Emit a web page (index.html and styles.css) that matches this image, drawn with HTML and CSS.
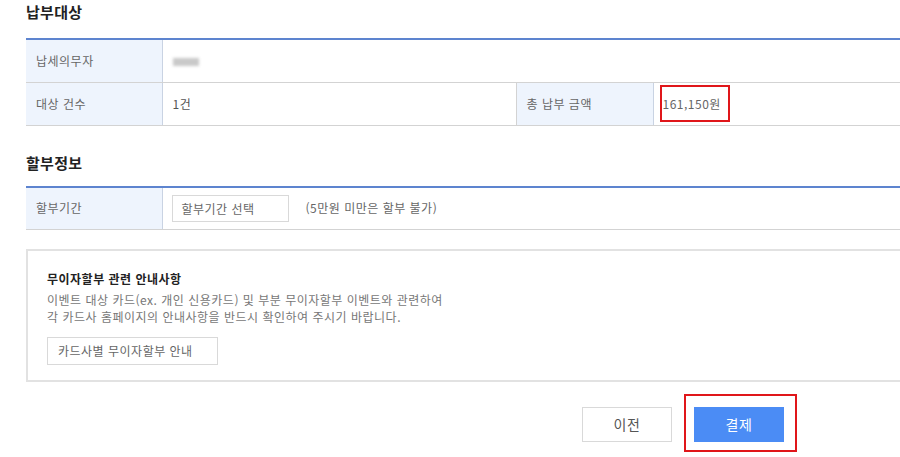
FILE: index.html
```html
<!DOCTYPE html>
<html lang="ko">
<head>
<meta charset="utf-8">
<link rel="stylesheet" href="styles.css">
</head>
<body>
<div class="page">
  <h2 class="sec-title first">납부대상</h2>
  <table class="info">
    <colgroup><col class="c1"><col class="c2"><col class="c3"><col class="c4"></colgroup>
    <tr>
      <th>납세의무자</th>
      <td colspan="3"><span class="blur"></span></td>
    </tr>
    <tr>
      <th>대상 건수</th>
      <td>1건</td>
      <th>총 납부 금액</th>
      <td class="amount"><span class="hl">161,150원</span></td>
    </tr>
  </table>

  <h2 class="sec-title second">할부정보</h2>
  <table class="info">
    <colgroup><col class="c1"><col></colgroup>
    <tr>
      <th>할부기간</th>
      <td class="sel-cell"><div class="sel-row"><span class="select">할부기간 선택</span><span class="note">(5만원 미만은 할부 불가)</span></div></td>
    </tr>
  </table>

  <div class="notice">
    <p class="notice-title">무이자할부 관련 안내사항</p>
    <p class="notice-text">이벤트 대상 카드(ex. 개인 신용카드) 및 부분 무이자할부 이벤트와 관련하여<br>각 카드사 홈페이지의 안내사항을 반드시 확인하여 주시기 바랍니다.</p>
    <span class="notice-btn">카드사별 무이자할부 안내</span>
  </div>

  <div class="actions">
    <span class="btn prev">이전</span>
    <span class="hl-box"><span class="btn pay">결제</span></span>
  </div>
</div>
</body>
</html>
```
FILE: styles.css
```css
* { box-sizing: border-box; }
html, body { margin: 0; padding: 0; background: #fff; }
body {
  font-family: "Noto Sans CJK KR", "Noto Sans", sans-serif;
  color: #555;
  font-size: 12px;
  letter-spacing: 0.5px;
  width: 900px;
  overflow: hidden;
}
.page { padding-left: 26px; width: 930px; }
.sec-title {
  margin: 0;
  font-size: 15px;
  font-weight: bold;
  color: #222;
  line-height: 20px;
  letter-spacing: 0.3px;
}
.sec-title.first { padding-top: 2px; margin-bottom: 16px; }
.sec-title.second { margin-top: 27px; margin-bottom: 13px; }
.info {
  width: 904px;
  border-collapse: collapse;
  border-top: 2px solid #5d84cf;
  table-layout: fixed;
}
.info col.c1 { width: 136px; }
.info col.c2 { width: 354px; }
.info col.c3 { width: 137px; }
.info th, .info td {
  height: 43px;
  border-bottom: 1px solid #d3d3d3;
  padding: 0 0 0 10px;
  text-align: left;
  font-weight: normal;
  vertical-align: middle;
  line-height: 16px;
}
.info th {
  background: #eef4fd;
  color: #666;
  border-right: 1px solid #c9d3e3;
}
.info td { color: #555; }
.info td + th { border-left: 1px solid #d3d3d3; }
.blur {
  display: inline-block;
  width: 26px;
  height: 8px;
  background: #c9c9c9;
  filter: blur(1.5px);
  vertical-align: middle;
}
.info td.amount { padding-left: 6px; }
.hl {
  display: inline-block;
  border: 2px solid #e0161a;
  height: 37px;
  line-height: 33px;
  padding: 0 7px 0 1px;
  color: #666;
}
.info td.sel-cell { padding-left: 9px; }
.sel-row { display: flex; align-items: center; height: 27px; }
.select {
  display: block;
  width: 117px;
  height: 27px;
  border: 1px solid #d9d9d9;
  line-height: 25px;
  padding-left: 9px;
  color: #666;
}
.note { margin-left: 17px; color: #666; }
.notice {
  margin-top: 19px;
  border: 2px solid #e2e2e2;
  height: 133px;
  width: 910px;
  padding: 19px 0 0 19px;
}
.notice p { margin: 0; }
.notice-title {
  font-weight: bold;
  color: #222;
  line-height: 18px;
  margin-bottom: 3px !important;
}
.notice-text { color: #777; line-height: 17px; }
.notice-btn {
  display: inline-block;
  margin-top: 12px;
  width: 171px;
  height: 28px;
  border: 1px solid #d9d9d9;
  line-height: 26px;
  padding-left: 10px;
  color: #666;
}
.actions {
  display: flex;
  align-items: flex-start;
  padding-left: 556px;
  margin-top: 12px;
}
.btn {
  display: inline-block;
  width: 90px;
  height: 35px;
  line-height: 35px;
  text-align: center;
  font-size: 14px;
}
.prev {
  margin-top: 13px;
  border: 1px solid #d9d9d9;
  line-height: 33px;
  color: #555;
}
.hl-box {
  margin-left: 12px;
  border: 2px solid #e0161a;
  padding: 11px 11px 8px 8px;
}
.pay { background: #4b8cf5; color: #fff; }
```
